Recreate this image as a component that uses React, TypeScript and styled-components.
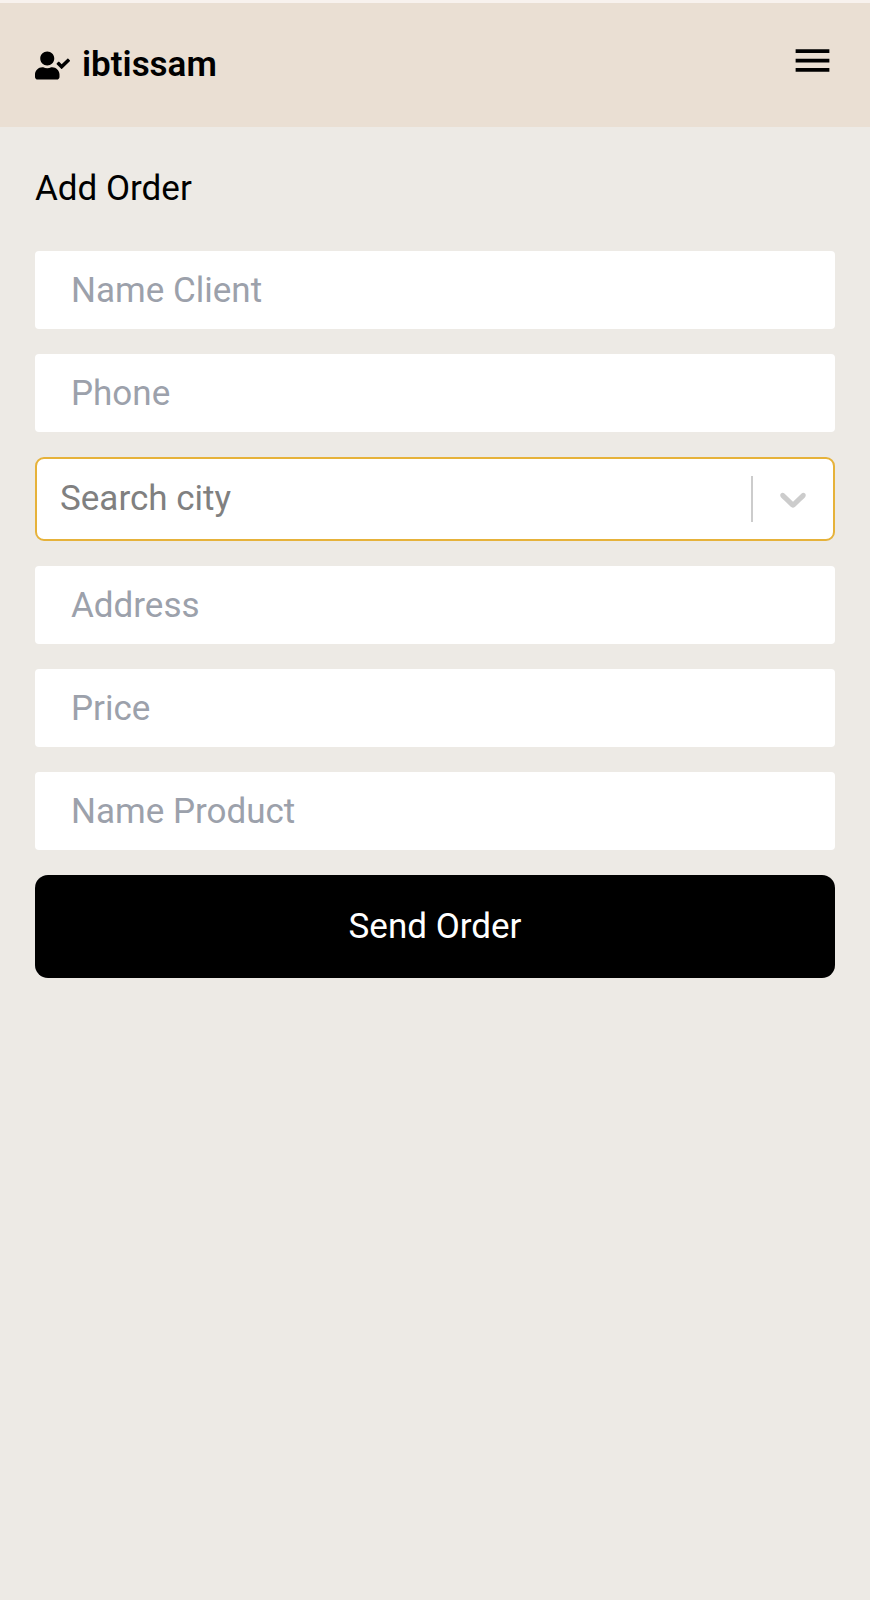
import React from "react";
import styled, { createGlobalStyle } from "styled-components";
import { FaUserCheck } from "react-icons/fa";

const GlobalStyle = createGlobalStyle`
  *, *::before, *::after { box-sizing: border-box; }
  body {
    margin: 0;
    background: #edeae5;
    color: #000;
    font-family: Roboto, "Liberation Sans", sans-serif;
    font-size: 35px;
    line-height: 54px;
  }
  button, input { font: inherit; }
`;

const Header = styled.header`
  display: flex;
  align-items: flex-start;
  justify-content: space-between;
  padding: 35px;
  border-top: 3px solid #f8f2ee;
  background: #eadfd3;
`;

const Brand = styled.a`
  display: flex;
  align-items: center;
  gap: 12px;
  color: inherit;
  font-weight: 600;
  text-decoration: none;
`;

const MenuButton = styled.button`
  display: flex;
  padding: 0;
  border: 0;
  background: none;
  color: inherit;
`;

const Main = styled.main`
  padding: 35px;
`;

const Title = styled.h1`
  margin: 0 0 35px;
  font-size: inherit;
  font-weight: 400;
`;

const OrderForm = styled.form`
  display: flex;
  flex-direction: column;
  gap: 25px;
`;

const Field = styled.input`
  width: 100%;
  height: 78px;
  padding: 0 36px;
  border: 0;
  border-radius: 4px;
  background: #fff;
  outline: none;
  &::placeholder { color: #9ca1ab; opacity: 1; }
`;

const Combo = styled.div`
  display: flex;
  align-items: center;
  height: 84px;
  border: 2px solid #e6b23a;
  border-radius: 9px;
  background: #fff;
`;

const ComboInput = styled.input`
  flex: 1;
  min-width: 0;
  padding: 0 23px;
  border: 0;
  background: none;
  outline: none;
  &::placeholder { color: #808080; opacity: 1; }
`;

const Separator = styled.span`
  width: 2px;
  height: 46px;
  background: #ccc;
`;

const ComboToggle = styled.button`
  display: flex;
  padding: 0 18px;
  border: 0;
  background: none;
  color: #ccc;
`;

const SubmitButton = styled.button`
  height: 103px;
  border: 0;
  border-radius: 13px;
  background: #000;
  color: #fff;
`;

export default function App() {
  return (
    <>
      <GlobalStyle />
      <Header>
        <Brand href="#">
          <FaUserCheck size={35} aria-hidden />
          ibtissam
        </Brand>
        <MenuButton type="button" aria-label="Open menu">
          <svg width="45" height="45" viewBox="0 0 24 24" fill="currentColor" aria-hidden>
            <path d="M3 18h18v-2H3v2zm0-5h18v-2H3v2zm0-7v2h18V6H3z" />
          </svg>
        </MenuButton>
      </Header>
      <Main>
        <Title>Add Order</Title>
        <OrderForm onSubmit={(e) => e.preventDefault()}>
          <Field type="text" placeholder="Name Client" aria-label="Name Client" />
          <Field type="tel" placeholder="Phone" aria-label="Phone" />
          <Combo>
            <ComboInput type="text" role="combobox" aria-expanded={false} placeholder="Search city" aria-label="Search city" />
            <Separator />
            <ComboToggle type="button" aria-label="Show cities">
              <svg width="44" height="44" viewBox="0 0 20 20" fill="currentColor" aria-hidden>
                <path d="M4.516 7.548c0.436-0.446 1.043-0.481 1.576 0l3.908 3.747 3.908-3.747c0.533-0.481 1.141-0.446 1.574 0 0.436 0.445 0.408 1.197 0 1.615-0.406 0.418-4.695 4.502-4.695 4.502-0.217 0.223-0.502 0.335-0.787 0.335s-0.57-0.112-0.789-0.335c0 0-4.287-4.084-4.695-4.502s-0.436-1.17 0-1.615z" />
              </svg>
            </ComboToggle>
          </Combo>
          <Field type="text" placeholder="Address" aria-label="Address" />
          <Field type="text" inputMode="decimal" placeholder="Price" aria-label="Price" />
          <Field type="text" placeholder="Name Product" aria-label="Name Product" />
          <SubmitButton type="submit">Send Order</SubmitButton>
        </OrderForm>
      </Main>
    </>
  );
}
